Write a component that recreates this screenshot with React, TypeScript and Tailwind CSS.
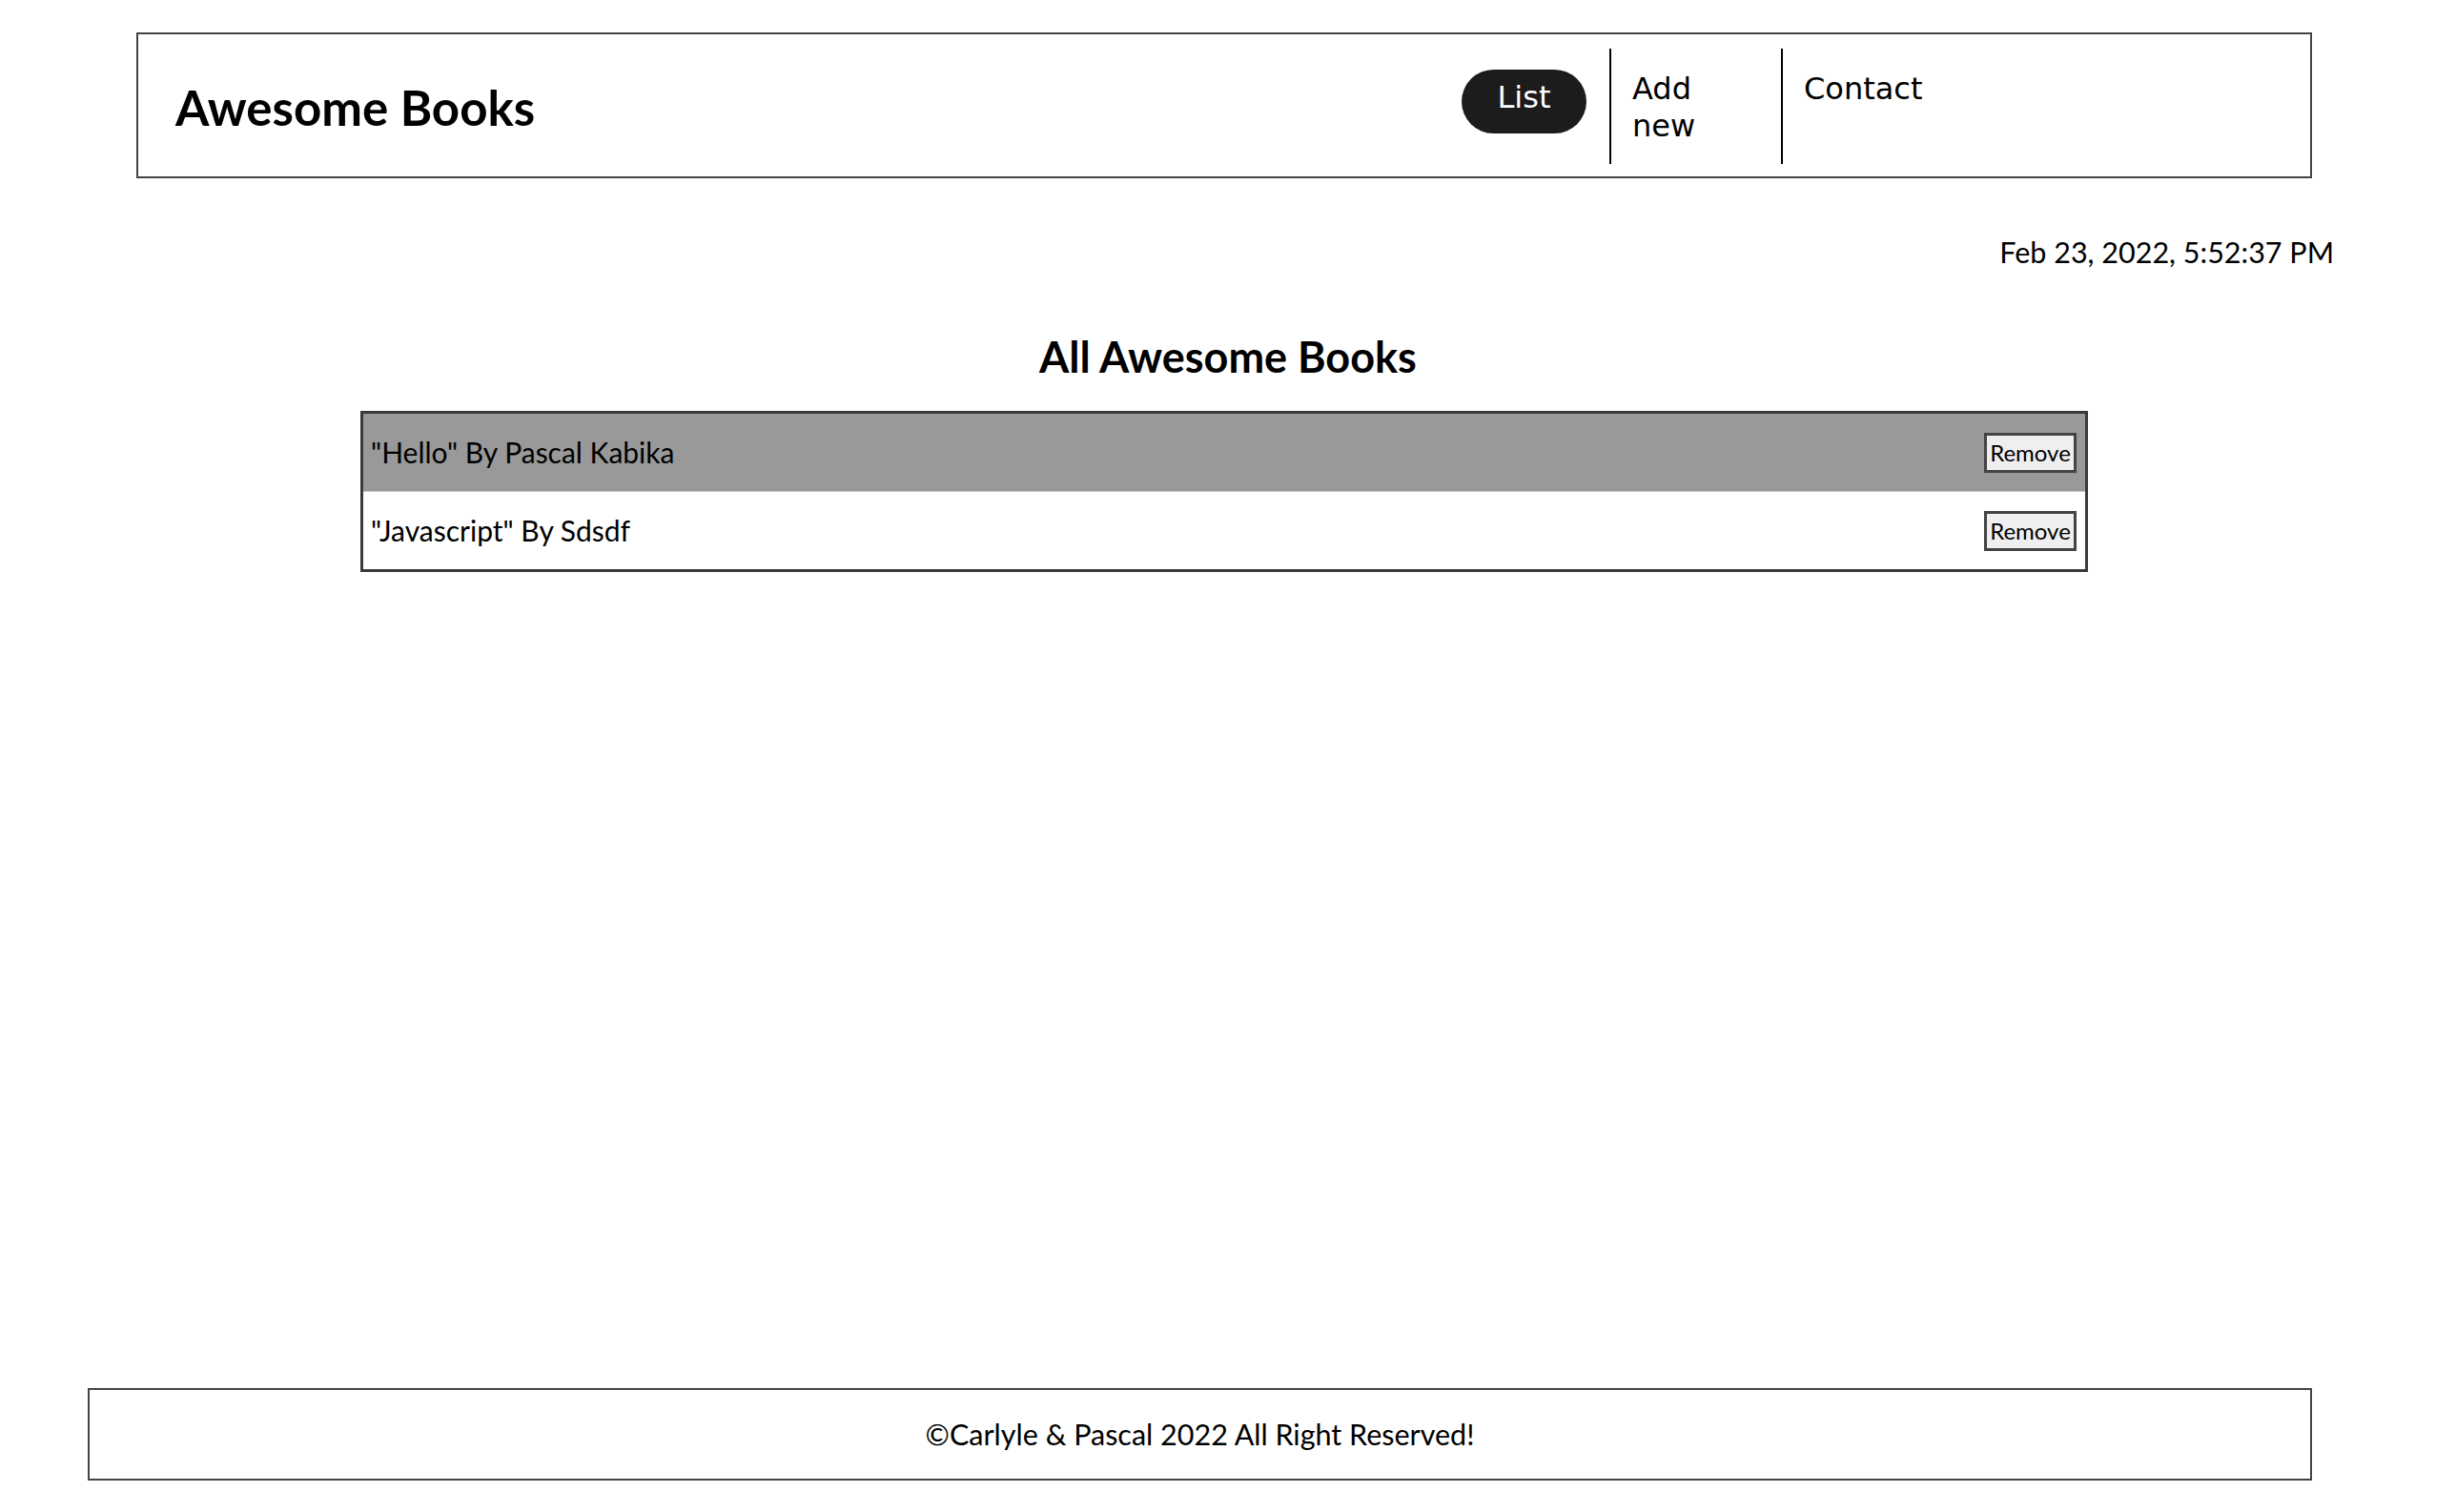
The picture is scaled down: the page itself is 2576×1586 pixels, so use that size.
import React from "react";

interface Book {
  id: number;
  title: string;
  author: string;
}

export default function App() {
  const books: Book[] = [
    { id: 1, title: "Hello", author: "Pascal Kabika" },
    { id: 2, title: "Javascript", author: "Sdsdf" },
  ];

  return (
    <div className="flex min-h-screen flex-col bg-white font-['Lato',sans-serif] text-black">
      {/* HEADER */}
      <header className="mt-[34px] ml-[143px] flex h-[153px] w-[2282px] border-2 border-[#444] pt-[15px] pb-[13px]">
        <h1 className="self-center pl-[39px] pt-[3px] text-[51px] leading-[62px] font-bold">
          Awesome Books
        </h1>

        <ul className="ml-auto flex w-[914px] font-['DejaVu_Sans',sans-serif] text-[32px] leading-[39px]">
          <li className="h-[121px] px-[24px] pt-[22px]">
            <a className="block h-[67px] w-[131px] rounded-full bg-[#1c1c1c] pt-[10px] text-center text-white">
              List
            </a>
          </li>
          <li className="h-[121px] w-[180px] border-l-2 border-black pt-[23px] pr-[22px] pl-[22px]">
            <a>Add new</a>
          </li>
          <li className="h-[121px] flex-1 border-l-2 border-black pt-[23px] pl-[22px]">
            <a>Contact</a>
          </li>
        </ul>
      </header>

      {/* DATE */}
      <p className="mt-[60px] pr-[128px] text-right text-[30.5px] leading-[35px]">
        Feb 23, 2022, 5:52:37 PM
      </p>

      {/* LIST */}
      <h2 className="mt-[65px] text-center text-[45px] leading-[54px] font-bold">
        All Awesome Books
      </h2>

      <div className="mt-[30px] ml-[378px] w-[1812px] border-[3px] border-[#3a3a3a]">
        {books.map((book, i) => (
          <div
            key={book.id}
            className={
              i % 2 === 0
                ? "flex h-[82px] items-center justify-between border-b border-[#c4c4c4] bg-[#999999] pr-[9px] pl-[8px]"
                : "flex h-[81px] items-center justify-between bg-white pr-[9px] pl-[8px]"
            }
          >
            <span className="text-[30px]">
              "{book.title}" By {book.author}
            </span>
            <button className="h-[42px] w-[97px] border-[3px] border-[#444] bg-[#efefef] text-[24px] leading-none">
              Remove
            </button>
          </div>
        ))}
      </div>

      {/* FOOTER */}
      <footer className="mt-auto mb-[33px] ml-[92px] flex h-[97px] w-[2333px] items-center justify-center border-2 border-[#444]">
        <p className="text-[30.5px]">©Carlyle &amp; Pascal 2022 All Right Reserved!</p>
      </footer>
    </div>
  );
}
